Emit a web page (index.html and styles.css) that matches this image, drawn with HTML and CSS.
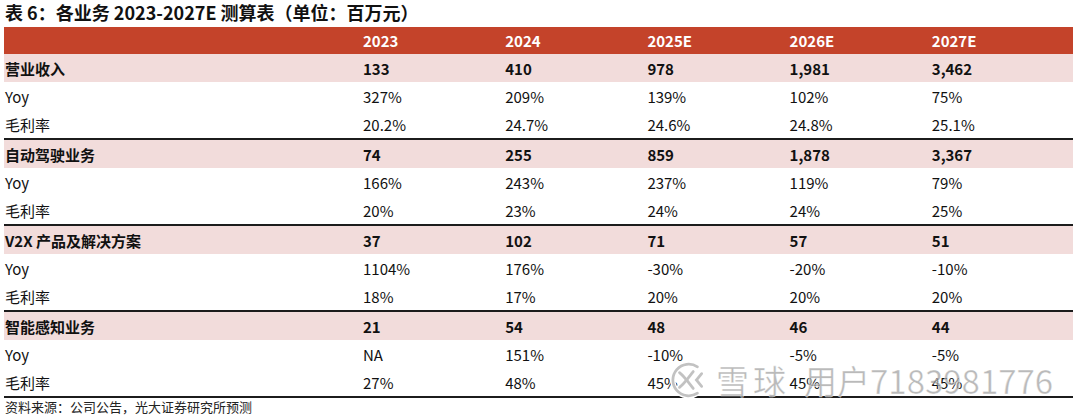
FILE: index.html
```html
<!DOCTYPE html>
<html lang="zh">
<head>
<meta charset="utf-8">
<title>表 6</title>
<link rel="stylesheet" href="styles.css">
</head>
<body>
<div class="page">
  <div class="title">表 6：各业务 2023-2027E 测算表（单位：百万元）</div>
  <div class="table">
    <div class="row head">
      <div class="cell"></div><div class="cell">2023</div><div class="cell">2024</div><div class="cell">2025E</div><div class="cell">2026E</div><div class="cell">2027E</div>
    </div>
    <div class="group">
      <div class="row main"><div class="cell">营业收入</div><div class="cell">133</div><div class="cell">410</div><div class="cell">978</div><div class="cell">1,981</div><div class="cell">3,462</div></div>
      <div class="row"><div class="cell">Yoy</div><div class="cell">327%</div><div class="cell">209%</div><div class="cell">139%</div><div class="cell">102%</div><div class="cell">75%</div></div>
      <div class="row"><div class="cell">毛利率</div><div class="cell">20.2%</div><div class="cell">24.7%</div><div class="cell">24.6%</div><div class="cell">24.8%</div><div class="cell">25.1%</div></div>
    </div>
    <div class="group">
      <div class="row main"><div class="cell">自动驾驶业务</div><div class="cell">74</div><div class="cell">255</div><div class="cell">859</div><div class="cell">1,878</div><div class="cell">3,367</div></div>
      <div class="row"><div class="cell">Yoy</div><div class="cell">166%</div><div class="cell">243%</div><div class="cell">237%</div><div class="cell">119%</div><div class="cell">79%</div></div>
      <div class="row"><div class="cell">毛利率</div><div class="cell">20%</div><div class="cell">23%</div><div class="cell">24%</div><div class="cell">24%</div><div class="cell">25%</div></div>
    </div>
    <div class="group">
      <div class="row main"><div class="cell">V2X 产品及解决方案</div><div class="cell">37</div><div class="cell">102</div><div class="cell">71</div><div class="cell">57</div><div class="cell">51</div></div>
      <div class="row"><div class="cell">Yoy</div><div class="cell">1104%</div><div class="cell">176%</div><div class="cell">-30%</div><div class="cell">-20%</div><div class="cell">-10%</div></div>
      <div class="row"><div class="cell">毛利率</div><div class="cell">18%</div><div class="cell">17%</div><div class="cell">20%</div><div class="cell">20%</div><div class="cell">20%</div></div>
    </div>
    <div class="group">
      <div class="row main"><div class="cell">智能感知业务</div><div class="cell">21</div><div class="cell">54</div><div class="cell">48</div><div class="cell">46</div><div class="cell">44</div></div>
      <div class="row"><div class="cell">Yoy</div><div class="cell">NA</div><div class="cell">151%</div><div class="cell">-10%</div><div class="cell">-5%</div><div class="cell">-5%</div></div>
      <div class="row"><div class="cell">毛利率</div><div class="cell">27%</div><div class="cell">48%</div><div class="cell">45%</div><div class="cell">45%</div><div class="cell">45%</div></div>
    </div>
  </div>
  <div class="source">资料来源：公司公告，光大证券研究所预测</div>

  <div class="watermark">
    <svg class="wm-logo" width="38" height="38" viewBox="0 0 36 36">
      <g fill="none" stroke-linecap="round">
        <g stroke="#ffffff" stroke-width="5">
          <path d="M26 5.5 A15 15 0 1 0 26 30.5"/>
          <path d="M9 11 C14 15 18 21 22 26"/>
          <path d="M9 25 C14 21 18 15 22 10"/>
          <path d="M30 12 L25 18 L30 24"/>
        </g>
        <g stroke="#c2c2c2" stroke-width="2.6">
          <path d="M26 5.5 A15 15 0 1 0 26 30.5"/>
          <path d="M9 11 C14 15 18 21 22 26"/>
          <path d="M9 25 C14 21 18 15 22 10"/>
          <path d="M30 12 L25 18 L30 24"/>
        </g>
      </g>
    </svg>
    <span class="wm-text wm-brand">雪球</span>
    <span class="wm-text wm-user">用户7183981776</span>
  </div>
</div>
</body>
</html>
```

FILE: styles.css
```css
html, body {
  margin: 0;
  padding: 0;
  background: #ffffff;
}

body {
  font-family: "Noto Sans CJK SC", "Noto Sans", sans-serif;
  color: #111111;
}

.page {
  position: relative;
  width: 1080px;
  height: 415px;
  overflow: hidden;
}

.title {
  height: 27px;
  line-height: 25px;
  padding-left: 5px;
  font-size: 18px;
  font-weight: 700;
  color: #111111;
}

.table {
  margin-left: 4px;
  width: 1069px;
}

.row {
  display: grid;
  grid-template-columns: 358px repeat(5, 1fr);
  height: 28px;
  align-items: center;
  font-size: 15px;
}

.cell {
  padding-left: 1px;
  white-space: nowrap;
}

.head {
  height: 27px;
  background: #c4432a;
  color: #ffffff;
  font-weight: 700;
}

.main {
  background: #f2dcdb;
  font-weight: 700;
  color: #111111;
}

.group {
  border-bottom: 2px solid #1c1c1c;
}

.source {
  height: 17px;
  line-height: 17px;
  padding-left: 5px;
  font-size: 13px;
  color: #222222;
}

.watermark {
  position: absolute;
  left: 670px;
  top: 361px;
  display: flex;
  align-items: center;
  gap: 8px;
  pointer-events: none;
}

.wm-logo {
  display: block;
}

.wm-text {
  font-family: "Noto Sans CJK SC", "Noto Sans", sans-serif;
  font-size: 33px;
  line-height: 38px;
  font-weight: 400;
  color: rgba(160, 160, 160, 0.72);
  -webkit-text-stroke: 0.6px rgba(255, 255, 255, 0.7);
}

.wm-brand {
  letter-spacing: 4px;
}

.wm-user {
  margin-left: 6px;
}
```
